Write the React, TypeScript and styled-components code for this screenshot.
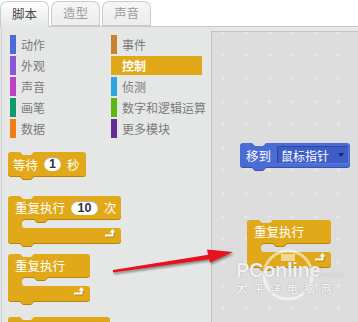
import React from "react"
import styled, { createGlobalStyle } from "styled-components"

const GlobalStyle = createGlobalStyle`
  html, body {
    margin: 0;
    padding: 0;
    background: #ffffff;
  }
  body {
    font-family: "Noto Sans CJK SC", "Noto Sans", sans-serif;
  }
`

const CONTROL = "#e1a91a"
const CONTROL_DARK = "#b5840d"
const MOTION = "#4a6cd4"
const MOTION_DARK = "#3452b0"

const Screen = styled.div`
  position: relative;
  width: 358px;
  height: 322px;
  overflow: hidden;
  display: flex;
  flex-direction: column;
  background: #e5e7e7;
`

const TabBar = styled.div`
  height: 27px;
  box-sizing: border-box;
  display: flex;
  align-items: flex-end;
  gap: 2px;
  background: #ffffff;
  border-bottom: 1px solid #cacaca;
`

const Tab = styled.div<{ $active?: boolean }>`
  width: 49px;
  height: ${(p) => (p.$active ? 26 : 25)}px;
  margin-bottom: ${(p) => (p.$active ? -1 : 0)}px;
  box-sizing: border-box;
  display: flex;
  align-items: center;
  justify-content: center;
  border: 1px solid #cccccc;
  border-bottom: ${(p) => (p.$active ? "none" : "1px solid #cacaca")};
  border-radius: 7px 7px 0 0;
  background: ${(p) =>
    p.$active
      ? "linear-gradient(#ffffff, #e5e7e7)"
      : "linear-gradient(#f6f6f6, #ececec)"};
  color: ${(p) => (p.$active ? "#4a4a4a" : "#9a9a9a")};
  font-size: 12.5px;
  padding-bottom: 2px;
`

const Body = styled.div`
  flex: 1;
  display: flex;
  min-height: 0;
`

const Palette = styled.div`
  width: 209px;
  margin-left: 1px;
  border-left: 1px solid #cfd0d0;
  display: flex;
  flex-direction: column;
`

const Categories = styled.div`
  display: grid;
  grid-template-columns: 101px 91px;
  row-gap: 2px;
  padding: 8px 0 0 8px;
`

const Category = styled.div<{ $color: string; $active?: boolean }>`
  height: 19px;
  display: flex;
  align-items: center;
  gap: 5px;
  white-space: nowrap;
  font-size: 12px;
  color: ${(p) => (p.$active ? "#ffffff" : "#7a7a7a")};
  font-weight: ${(p) => (p.$active ? 700 : 400)};
  background: ${(p) => (p.$active ? p.$color : "transparent")};
  &::before {
    content: "";
    flex: none;
    width: 6px;
    height: 19px;
    background: ${(p) => p.$color};
  }
`

const Separator = styled.div`
  height: 1px;
  margin: 6px 9px 0 8px;
  background: #c4c4c4;
  box-shadow: 0 1px 0 #f2f2f2;
`

const BlockList = styled.div`
  display: flex;
  flex-direction: column;
  align-items: flex-start;
  padding-left: 6px;
`

const BlockBox = styled.div<{ $w: number; $h: number; $top?: number }>`
  position: relative;
  flex: none;
  width: ${(p) => p.$w}px;
  height: ${(p) => p.$h}px;
  margin-top: ${(p) => p.$top ?? 0}px;
  color: #ffffff;
  font-size: 12.5px;
`

const ShapeSvg = styled.svg`
  position: absolute;
  left: 0;
  top: 0;
  overflow: visible;
`

const BlockRow = styled.div<{ $h: number; $pad?: number }>`
  position: relative;
  height: ${(p) => p.$h}px;
  display: flex;
  align-items: center;
  gap: 6px;
  padding-left: ${(p) => p.$pad ?? 7}px;
  white-space: nowrap;
`

const NumberSlot = styled.span<{ $w: number }>`
  width: ${(p) => p.$w}px;
  height: 14px;
  border-radius: 7px;
  background: #ffffff;
  color: #2f2f4a;
  font-family: "Liberation Sans", Arial, sans-serif;
  font-weight: 700;
  font-size: 12.5px;
  display: inline-flex;
  align-items: center;
  justify-content: center;
  box-shadow: inset 0 1px 1px rgba(0, 0, 0, 0.35);
`

const Dropdown = styled.span`
  height: 18px;
  width: 72px;
  box-sizing: border-box;
  display: inline-flex;
  align-items: center;
  justify-content: space-between;
  padding: 0 4px 0 3px;
  background: #3e5ec6;
  border: 1px solid #2c47a3;
  border-right-color: #5a79dc;
  border-bottom-color: #5a79dc;
  border-radius: 2px;
  font-size: 12px;
  &::after {
    content: "";
    border-left: 3px solid transparent;
    border-right: 3px solid transparent;
    border-top: 4px solid #1b2a63;
  }
`

const LoopIcon = styled.svg`
  position: absolute;
  right: 4px;
  bottom: 5px;
`

const Scripts = styled.div`
  flex: 1;
  position: relative;
  margin-top: 4px;
  border-left: 1px solid #c4c4c4;
  border-top: 1px solid #c4c4c4;
  background: #dddddd;
`

const GridSvg = styled.svg`
  position: absolute;
  inset: 0;
  width: 100%;
  height: 100%;
`

const Placed = styled.div<{ $x: number; $y: number }>`
  position: absolute;
  left: ${(p) => p.$x}px;
  top: ${(p) => p.$y}px;
`

const Arrow = styled.svg`
  position: absolute;
  left: 100px;
  top: 240px;
  filter: drop-shadow(1px 2px 1px rgba(0, 0, 0, 0.4));
`

const Watermark = styled.div`
  position: absolute;
  left: 236px;
  top: 246px;
  width: 110px;
  height: 56px;
  color: rgba(255, 255, 255, 0.88);
  text-shadow: 0 0 1px rgba(130, 130, 130, 0.9);
  pointer-events: none;
`

const MarkRing = styled.svg`
  position: absolute;
  left: 25px;
  top: 2px;
`

const MarkLogo = styled.div`
  position: relative;
  margin-top: 13px;
  display: flex;
  align-items: baseline;
  font-family: "Liberation Sans", Arial, sans-serif;
  font-weight: 700;
  font-size: 20px;
  letter-spacing: -0.3px;
  small {
    font-size: 7px;
    font-weight: 400;
    letter-spacing: 0;
    margin-left: 1px;
  }
`

const MarkName = styled.div`
  position: relative;
  font-size: 11px;
  font-weight: 700;
  letter-spacing: 6px;
  margin-top: -2px;
`

const notch = (y: number, x = 0, down = 3) =>
  `L${x + 26},${y} L${x + 23},${y + down} L${x + 15},${y + down} L${x + 12},${y}`

const stackPath = (w: number, h: number) =>
  `M0,3 Q0,0 3,0 L12,0 L15,3 L23,3 L26,0 L${w - 3},0 Q${w},0 ${w},3 ` +
  `L${w},${h - 3} Q${w},${h} ${w - 3},${h} ${notch(h)} L3,${h} Q0,${h} 0,${h - 3} Z`

const cPath = (w: number, a: number, m: number, b: number) => {
  const L = 14
  const h = a + m + b
  return (
    `M0,3 Q0,0 3,0 L12,0 L15,3 L23,3 L26,0 L${w - 3},0 Q${w},0 ${w},3 ` +
    `L${w},${a - 3} Q${w},${a} ${w - 3},${a} ${notch(a, L)} ` +
    `L${L + 3},${a} Q${L},${a} ${L},${a + 3} L${L},${a + m - 3} Q${L},${a + m} ${L + 3},${a + m} ` +
    `L${w - 3},${a + m} Q${w},${a + m} ${w},${a + m + 3} L${w},${h - 3} Q${w},${h} ${w - 3},${h} ` +
    `${notch(h)} L3,${h} Q0,${h} 0,${h - 3} Z`
  )
}

const Shape = ({ d, w, h, fill, shade }: { d: string; w: number; h: number; fill: string; shade: string }) => (
  <ShapeSvg width={w} height={h + 4}>
    <path d={d} fill={shade} transform="translate(0,1)" />
    <path d={d} fill={fill} />
  </ShapeSvg>
)

const Loop = () => (
  <LoopIcon width="13" height="10" viewBox="0 0 13 10">
    <g transform="translate(1,1)" fill={CONTROL_DARK} stroke={CONTROL_DARK}>
      <path d="M1 7.5H8.5V4" fill="none" strokeWidth="2" />
      <path d="M5.5 4.5L8.5 1L11.5 4.5Z" stroke="none" />
    </g>
    <g fill="#ffffff" stroke="#ffffff">
      <path d="M1 7.5H8.5V4" fill="none" strokeWidth="2" />
      <path d="M5.5 4.5L8.5 1L11.5 4.5Z" stroke="none" />
    </g>
  </LoopIcon>
)

const StackBlock = ({ w, top, pad, fill = CONTROL, shade = CONTROL_DARK, children }: {
  w: number; top?: number; pad?: number; fill?: string; shade?: string; children?: React.ReactNode
}) => (
  <BlockBox $w={w} $h={24} $top={top}>
    <Shape d={stackPath(w, 24)} w={w} h={24} fill={fill} shade={shade} />
    <BlockRow $h={24} $pad={pad}>{children}</BlockRow>
  </BlockBox>
)

const CBlock = ({ w, top, children }: { w: number; top?: number; children: React.ReactNode }) => (
  <BlockBox $w={w} $h={47} $top={top}>
    <Shape d={cPath(w, 23, 9, 15)} w={w} h={47} fill={CONTROL} shade={CONTROL_DARK} />
    <BlockRow $h={23}>{children}</BlockRow>
    <Loop />
  </BlockBox>
)

const categories = [
  { name: "动作", color: "#4a6cd4" },
  { name: "事件", color: "#c88330" },
  { name: "外观", color: "#8a55d7" },
  { name: "控制", color: CONTROL, active: true },
  { name: "声音", color: "#bb42c3" },
  { name: "侦测", color: "#2ca5e2" },
  { name: "画笔", color: "#0e9a6c" },
  { name: "数字和逻辑运算", color: "#5cb712" },
  { name: "数据", color: "#ee7d16" },
  { name: "更多模块", color: "#632d99" },
]

export default function App() {
  return (
    <>
      <GlobalStyle />
      <Screen>
        <TabBar>
          <Tab $active>脚本</Tab>
          <Tab>造型</Tab>
          <Tab>声音</Tab>
        </TabBar>
        <Body>
          <Palette>
            <Categories>
              {categories.map((c) => (
                <Category key={c.name} $color={c.color} $active={c.active}>
                  {c.name}
                </Category>
              ))}
            </Categories>
            <Separator />
            <BlockList>
              <StackBlock w={78} top={8} pad={5}>
                等待 <NumberSlot $w={17}>1</NumberSlot> 秒
              </StackBlock>
              <CBlock w={113} top={20}>
                重复执行 <NumberSlot $w={27}>10</NumberSlot> 次
              </CBlock>
              <CBlock w={82} top={11}>
                重复执行
              </CBlock>
              <StackBlock w={102} top={16} />
            </BlockList>
          </Palette>
          <Scripts>
            <GridSvg aria-hidden>
              <defs>
                <pattern id="plus" width="23" height="23" patternUnits="userSpaceOnUse" x="9" y="-2">
                  <path d="M0 2.5H5M2.5 0V5" stroke="#e8e8e8" strokeWidth="1" shapeRendering="crispEdges" />
                </pattern>
              </defs>
              <rect width="100%" height="100%" fill="url(#plus)" />
            </GridSvg>
            <Placed $x={28} $y={111}>
              <StackBlock w={110} pad={6} fill={MOTION} shade={MOTION_DARK}>
                移到 <Dropdown>鼠标指针</Dropdown>
              </StackBlock>
            </Placed>
            <Placed $x={35} $y={188}>
              <CBlock w={84}>重复执行</CBlock>
            </Placed>
          </Scripts>
        </Body>
        <Arrow width="140" height="36" viewBox="0 0 140 36">
          <polygon points="13,30 13,32.5 111,19 110,14.5" fill="#e8121c" />
          <polygon points="107,9.5 133,12 110,22.5" fill="#e8121c" />
        </Arrow>
        <Watermark>
          <MarkRing width="54" height="54" viewBox="0 0 54 54">
            <circle cx="27" cy="27" r="24" fill="none" stroke="rgba(255,255,255,0.55)" strokeWidth="3" />
            <rect x="20" y="6" width="14" height="7" fill="rgba(255,255,255,0.55)" />
          </MarkRing>
          <MarkLogo>
            PConline<small>com.cn</small>
          </MarkLogo>
          <MarkName>太平洋电脑网</MarkName>
        </Watermark>
      </Screen>
    </>
  )
}
